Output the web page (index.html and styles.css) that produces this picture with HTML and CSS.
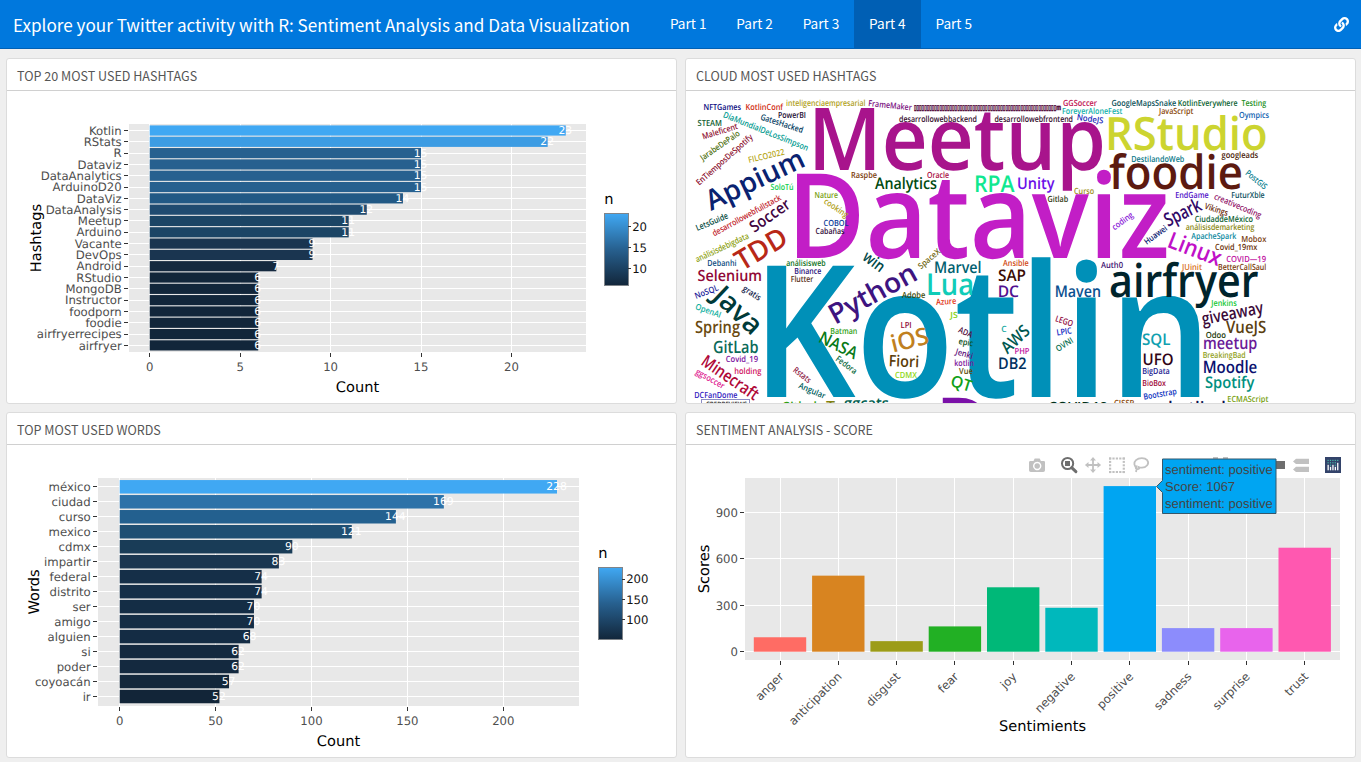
FILE: index.html
```html
<!DOCTYPE html>
<html lang="en">
<head>
<meta charset="utf-8">
<title>Explore your Twitter activity with R</title>
<link rel="stylesheet" href="styles.css">
</head>
<body>
<header class="navbar">
  <h1 class="brand">Explore your Twitter activity with R: Sentiment Analysis and Data Visualization</h1>
  <nav class="tabs">
    <a class="tab">Part 1</a><a class="tab">Part 2</a><a class="tab">Part 3</a><a class="tab active">Part 4</a><a class="tab">Part 5</a>
  </nav>
  <svg class="link-icon" viewBox="0 0 512 512"><path d="M326.612 185.391c59.747 59.809 58.927 155.698.36 214.59-.11.12-.24.25-.36.37l-67.2 67.2c-59.27 59.27-155.699 59.262-214.96 0-59.27-59.26-59.27-155.7 0-214.96l37.106-37.106c9.84-9.84 26.786-3.3 27.294 10.606.648 17.722 3.826 35.527 9.69 52.721 1.986 5.822.567 12.262-3.783 16.612l-13.087 13.087c-28.026 28.026-28.905 73.66-1.155 101.96 28.024 28.579 74.086 28.749 102.325.51l67.2-67.19c28.191-28.191 28.073-73.757 0-101.83-3.701-3.694-7.429-6.564-10.341-8.569a16.037 16.037 0 0 1-6.947-12.606c-.396-10.567 3.348-21.456 11.698-29.806l21.054-21.055c5.521-5.521 14.182-6.199 20.584-1.731a152.482 152.482 0 0 1 20.522 17.197zM467.547 44.449c-59.261-59.262-155.69-59.27-214.96 0l-67.2 67.2c-.12.12-.25.25-.36.37-58.566 58.892-59.387 154.781.36 214.59a152.454 152.454 0 0 0 20.521 17.196c6.402 4.468 15.064 3.789 20.584-1.731l21.054-21.055c8.35-8.35 12.094-19.239 11.698-29.806a16.037 16.037 0 0 0-6.947-12.606c-2.912-2.005-6.64-4.875-10.341-8.569-28.073-28.073-28.191-73.639 0-101.83l67.2-67.19c28.239-28.239 74.3-28.069 102.325.51 27.75 28.3 26.872 73.934-1.155 101.96l-13.087 13.087c-4.35 4.35-5.769 10.79-3.783 16.612 5.864 17.194 9.042 34.999 9.69 52.721.509 13.906 17.454 20.446 27.294 10.606l37.106-37.106c59.271-59.259 59.271-155.699.001-214.959z"/></svg>
</header>
<main class="grid">
  <section class="card"><h2 class="card-title">TOP 20 MOST USED HASHTAGS</h2><svg id="hashtags" class="chart" viewBox="7 91 669 312"></svg></section>
  <section class="card"><h2 class="card-title">CLOUD MOST USED HASHTAGS</h2><svg id="cloud" class="chart cloud" viewBox="686 91 669 312"></svg></section>
  <section class="card"><h2 class="card-title">TOP MOST USED WORDS</h2><svg id="words" class="chart" viewBox="7 445 669 312"></svg></section>
  <section class="card"><h2 class="card-title">SENTIMENT ANALYSIS - SCORE</h2><svg id="scores" class="chart" viewBox="686 445 669 312"></svg></section>
</main>
<script src="charts.js"></script>
</body>
</html>
```

FILE: styles.css
```css
* { box-sizing: border-box; }
body {
  margin: 0;
  height: 762px;
  overflow: hidden;
  background: #efefef;
  font-family: "Noto Sans CJK SC", "Open Sans", sans-serif;
}
.navbar {
  display: flex;
  align-items: center;
  height: 49px;
  padding: 0 12px 0 13px;
  background: #0078dd;
  border-bottom: 1px solid #0060b4;
  color: #fff;
}
.brand {
  width: 642px;
  margin: 0;
  font-size: 17.12px;
  font-weight: 400;
  line-height: 47px;
  white-space: nowrap;
}
.tabs { display: flex; height: 48px; }
.tab {
  width: 66.4px;
  text-align: center;
  font-size: 13.6px;
  line-height: 47px;
  white-space: nowrap;
}
.tab.active { background: #005fb4; }
.link-icon { width: 15px; height: 15px; margin-left: auto; fill: #fff; }
.grid {
  display: grid;
  grid-template-columns: 671px 671px;
  grid-template-rows: 346px 346px;
  gap: 8px;
  padding: 9px 0 0 6px;
}
.card {
  display: flex;
  flex-direction: column;
  overflow: hidden;
  background: #fff;
  border: 1px solid #dcdcdc;
  border-radius: 3px;
}
.card-title {
  height: 32px;
  margin: 0;
  padding-left: 10px;
  border-bottom: 1px solid #d0d0d0;
  color: #565656;
  font-size: 12.55px;
  font-weight: 400;
  line-height: 33px;
}
.chart { display: block; width: 669px; height: 312px; font-family: "DejaVu Sans", sans-serif; text-rendering: geometricPrecision; }
.cloud { font-family: "Open Sans", "Noto Sans", sans-serif; font-weight: 600; }
.tick-label { font-size: 11.7px; fill: #4d4d4d; }
.legend-label { font-size: 11.7px; fill: #111; }
.axis-title { font-size: 14.6px; fill: #000; }
.value { font-size: 10.8px; fill: #fff; text-anchor: middle; }
.mid { text-anchor: middle; }
.end { text-anchor: end; }
.hover { font-family: "Liberation Sans", Arial, sans-serif; font-size: 13px; fill: #444; }
.symbol { font-family: "DejaVu Sans", sans-serif; stroke: #500838; stroke-width: 0.5px; }
```

FILE: charts.js
```js
const NS = 'http://www.w3.org/2000/svg';
function add(parent, tag, attrs, text) {
  const e = document.createElementNS(NS, tag);
  for (const k in attrs) e.setAttribute(k, attrs[k]);
  if (text !== undefined) e.textContent = text;
  parent.appendChild(e);
  return e;
}
const rect = (s, x, y, w, h, fill, more) => add(s, 'rect', { x, y, width: w, height: h, fill, ...more });

function barChart(c) {
  const s = document.getElementById(c.id);
  const [px, py, pw, ph] = c.plot;
  rect(s, px, py, pw, ph, '#e8e8e8');
  c.ticks.forEach(t => {
    const x = Math.round(c.x0 + t * c.unit - 0.5);
    rect(s, x, py, 1, ph, '#fff');
    rect(s, x, py + ph + 1, 1, 4, '#333');
    add(s, 'text', { x: c.x0 + t * c.unit, y: py + ph + 19, class: 'tick-label mid' }, t);
  });
  c.rows.forEach((r, i) => {
    const y = c.y0 + i * c.step;
    rect(s, px, Math.round(y - 0.5), pw, 1, '#fff');
    rect(s, px - 5, Math.round(y - 0.5), 4, 1, '#333');
    add(s, 'text', { x: px - 7.3, y: y + 4.2, class: 'tick-label end' }, r[0]);
  });
  c.rows.forEach((r, i) => rect(s, c.x0, c.y0 + i * c.step - c.step * 0.45, r[1] * c.unit, c.step * 0.9, c.colors[r[1]]));
  c.rows.forEach((r, i) => add(s, 'text', { x: c.x0 + r[1] * c.unit - 0.5, y: c.y0 + i * c.step + 3.5, class: 'value' }, r[1]));
  add(s, 'text', { x: px + pw / 2, y: py + ph + 40.3, class: 'axis-title mid' }, 'Count');
  add(s, 'text', { transform: `translate(${c.label[1]} ${py + ph / 2}) rotate(-90)`, class: 'axis-title mid' }, c.label[0]);
  const [lx, ly] = c.legend;
  const g = add(s, 'linearGradient', { id: c.id + '-g', x1: 0, y1: 0, x2: 0, y2: 1 });
  [['0', '#40a8f3'], ['0.5', '#27608f'], ['1', '#12263a']].forEach(a => add(g, 'stop', { offset: a[0], 'stop-color': a[1] }));
  add(s, 'text', { x: lx + 0.2, y: ly - 9.3, class: 'axis-title' }, 'n');
  rect(s, lx + 0.5, ly + 0.5, 24, 72, `url(#${c.id}-g)`, { stroke: '#7f8489' });
  c.scale.forEach(a => {
    rect(s, lx + 24, Math.round(a[1] - 0.5), 3, 1, '#333');
    add(s, 'text', { x: lx + 28.2, y: a[1] + 4.3, class: 'legend-label' }, a[0]);
  });
}

barChart({
  id: 'hashtags', plot: [129, 124, 457, 228], x0: 149.7, unit: 18.09, y0: 130.5, step: 11.31,
  ticks: [0, 5, 10, 15, 20], label: ['Hashtags', 41], legend: [604, 213],
  scale: [[20, 226.7], [15, 247.7], [10, 268.3]],
  colors: { 6: '#12263a', 7: '#15293f', 9: '#1a3550', 11: '#1c4565', 12: '#204b70', 14: '#225985', 15: '#27608f', 22: '#3c9ce3', 23: '#40a8f3' },
  rows: [['Kotlin', 23], ['RStats', 22], ['R', 15], ['Dataviz', 15], ['DataAnalytics', 15], ['ArduinoD20', 15], ['DataViz', 14], ['DataAnalysis', 12], ['Meetup', 11], ['Arduino', 11], ['Vacante', 9], ['DevOps', 9], ['Android', 7], ['RStudio', 6], ['MongoDB', 6], ['Instructor', 6], ['foodporn', 6], ['foodie', 6], ['airfryerrecipes', 6], ['airfryer', 6]]
});
barChart({
  id: 'words', plot: [98, 478, 481, 228], x0: 119.7, unit: 1.918, y0: 486.8, step: 14.98,
  ticks: [0, 50, 100, 150, 200], label: ['Words', 39], legend: [598, 567],
  scale: [[200, 579], [150, 599.7], [100, 619.8]],
  colors: { 228: '#40a8f3', 169: '#2d72a8', 144: '#23608f', 121: '#1f4f73', 90: '#193c57', 83: '#1a3650', 74: '#152f48', 70: '#142d45', 68: '#142c44', 62: '#14293f', 57: '#13273b', 52: '#122538' },
  rows: [['méxico', 228], ['ciudad', 169], ['curso', 144], ['mexico', 121], ['cdmx', 90], ['impartir', 83], ['federal', 74], ['distrito', 74], ['ser', 70], ['amigo', 70], ['alguien', 68], ['si', 62], ['poder', 62], ['coyoacán', 57], ['ir', 52]]
});

(function scores() {
  const s = document.getElementById('scores');
  rect(s, 745, 478, 595, 182, '#e8e8e8');
  const zero = 651.7, unit = 0.1552;
  [0, 300, 600, 900].forEach(v => {
    const y = Math.round(zero - v * unit - 0.5);
    rect(s, 745, y, 595, 1, '#fff');
    rect(s, 740, y, 4, 1, '#333');
    add(s, 'text', { x: 738, y: y + 4.5, class: 'tick-label end' }, v);
  });
  [['anger', 93, '#ff6c64'], ['anticipation', 490, '#d88420'], ['disgust', 68, '#9c9c18'], ['fear', 163, '#22b024'], ['joy', 415, '#00b878'], ['negative', 283, '#00b8bc'], ['positive', 1067, '#00a5f2'], ['sadness', 152, '#8c8cfc'], ['surprise', 152, '#e864ec'], ['trust', 670, '#ff58b0']].forEach((r, i) => {
    const x = 780 + i * 58.3;
    rect(s, Math.round(x - 0.5), 478, 1, 182, '#fff');
    rect(s, Math.round(x - 0.5), 661, 1, 4, '#333');
    rect(s, x - 26.2, zero - r[1] * unit, 52.4, r[1] * unit, r[2]);
    add(s, 'text', { transform: `translate(${x + 4.3} 677.3) rotate(-45)`, class: 'tick-label end' }, r[0]);
  });
  add(s, 'text', { x: 1042.5, y: 731, class: 'axis-title mid' }, 'Sentimients');
  add(s, 'text', { transform: 'translate(709 569) rotate(-90)', class: 'axis-title mid' }, 'Scores');

  const light = '#c1c1c1', dark = '#6e6e6e';
  add(s, 'path', { fill: light, 'fill-rule': 'evenodd', d: 'M1030.5 461h3l1.2-2.4h5l1.2 2.4h3q1.1 0 1.1 1.2v8q0 1.8-1.8 1.8h-12.4q-1.8 0-1.8-1.8v-8q0-1.2 1.5-1.2zM1037.2 461.8a4.2 4.2 0 1 0 .01 0zM1037.2 463.2a2.8 2.8 0 1 1-.01 0z' });
  add(s, 'circle', { cx: 1067.6, cy: 463.5, r: 5.6, fill: 'none', stroke: dark, 'stroke-width': 2 });
  rect(s, 1065, 461, 5, 5, dark);
  add(s, 'path', { d: 'M1071.7 467.7l4.2 4', stroke: dark, 'stroke-width': 3, 'stroke-linecap': 'round' });
  add(s, 'path', { fill: light, d: 'M1093 457l3 3.6h-2.1v3.5h3.6v-2.1l3.6 3-3.6 3v-2.1h-3.6v3.5h2.1l-3 3.6-3-3.6h2.1v-3.5h-3.6v2.1l-3.6-3 3.6-3v2.1h3.6v-3.5h-2.1z' });
  for (let k = 0; k < 5; k++) {
    const o = k * 3.4;
    rect(s, 1109 + o, 457.5, 2.2, 2, light);
    rect(s, 1109 + o, 471, 2.2, 2, light);
    rect(s, 1109, 457.5 + o, 2.2, 2, light);
    rect(s, 1122.7, 457.5 + o, 2.2, 2, light);
  }
  add(s, 'path', { fill: 'none', stroke: light, 'stroke-width': 1.8, d: 'M1137 467.6c-3-1.4-3.6-5-1-7.4 3-2.8 8.8-2.8 11.2 0 2.6 3.4-.6 7.6-5.6 7.4-2 0-3-.3-4-.9M1137.4 466.2c-2-.2-2.4 2.4-.4 2.8s3.2-1.2 1.4-2.2M1136.6 469l-.6 3' });
  rect(s, 1213, 457, 5, 4, light);
  rect(s, 1223, 457, 5, 4, light);
  rect(s, 1270, 461, 15, 8, dark);
  add(s, 'path', { fill: light, d: 'M1293 461.5l3-2.7h13v5.2h-13zM1293 469.5l3-2.7h13v5.2h-13z' });
  rect(s, 1325, 457, 16, 16, '#33436a');
  [464.8, 466.8, 464.8, 466.8, 462.8].forEach((top, k) => {
    const x = 1327.5 + k * 2.4;
    rect(s, x, top, 1.3, 470.3 - top, '#fff');
    for (let y = 459.8; y < top - 1.5; y += 2.4) rect(s, x, y, 1.2, 1.2, '#48b8a8');
  });
  add(s, 'path', { fill: '#00a5f2', stroke: '#35576a', d: 'M1156.5 486.5l6-6v-21.5h113.5v54.5h-113.5v-21z' });
  ['sentiment: positive', 'Score: 1067', 'sentiment: positive'].forEach((t, i) =>
    add(s, 'text', { x: 1165, y: 474 + i * 17, class: 'hover' }, t));
})();

/* Each word: text, font size, colour, baseline start x/y, baseline end x/y */
const words = [
  ['Kotlin', 184, '#0090b8', 752, 397.3, 1212, 397.3],
  ['Dataviz', 118, '#c21ec6', 787, 257.7, 1170, 257.7],
  ['Meetup', 87, '#a8148c', 808, 170.3, 1106, 170.3],
  ['RStudio', 46, '#ccd430', 1105, 149.7, 1267.5, 149.7],
  ['foodie', 47, '#5c1a10', 1109, 189, 1243, 189],
  ['airfryer', 46, '#00242c', 1109, 297.3, 1258.5, 297.3],
  ['NFTGames', 8, '#0a0a80', 703.5, 110, 741, 110],
  ['KotlinConf', 8, '#d02a10', 745.5, 110, 783, 110],
  ['inteligenciaempresarial', 8, '#b0a020', 786, 106.3, 865.5, 106.3],
  ['FrameMaker', 8, '#7a1080', 868, 106, 911.5, 110.5],
  ['PowerBI', 8, '#200830', 778, 117.7, 806, 117.7],
  ['GatesHacked', 8, '#003a60', 760, 119.5, 802, 133],
  ['STEAM', 8, '#106030', 697.5, 126, 722, 126],
  ['Maleficent', 8, '#901030', 703.3, 139.5, 738.3, 128.7],
  ['JarabeDePalo', 8, '#507010', 702.7, 161, 740.5, 134.7],
  ['EnTiemposDeSpotify', 8, '#8c1030', 699.3, 185.7, 753.5, 138],
  ['DíaMundialDeLosSimpson', 8, '#009a90', 722.5, 117, 807, 151],
  ['FILCO2022', 8, '#b8a820', 749, 163, 785, 154.5],
  ['Appium', 28, '#0a2270', 711, 211, 807, 165.5],
  ['SoloTú', 8, '#10d050', 770.5, 190, 793.5, 190],
  ['LetsGuide', 8, '#00483c', 697.3, 231, 728.7, 218],
  ['desarrollowebfullstack', 8, '#c02028', 714.3, 236.5, 781.7, 199.5],
  ['Soccer', 16, '#400440', 754.3, 233, 791.5, 207],
  ['Raspbe', 8, '#7a3a08', 851, 177.7, 877, 177.7],
  ['Nature', 8, '#78a010', 814.5, 197.7, 838, 197.7],
  ['cooking', 8, '#b0a020', 823.3, 202.7, 846, 218],
  ['COBOL', 8, '#0a3a98', 823.5, 226, 848.5, 226],
  ['Cabañas', 8, '#300838', 815.5, 234, 844.5, 234],
  ['TDD', 28, '#b82818', 742, 271.5, 790, 243],
  ['análisisdebigdata', 8, '#8ca010', 697, 262.5, 749.5, 238],
  ['desarrollowebbackend', 8, '#300828', 899, 121.7, 977, 121.7],
  ['desarrollowebfrontend', 8, '#300828', 994.5, 121.7, 1073, 121.7],
  ['▯'.repeat(56) + 'm', 7.5, '#500838', 914, 110, 1061, 110, 'symbol'],
  ['Oracle', 8, '#a80840', 927, 177.7, 949, 177.7],
  ['Analytics', 16, '#004a10', 875, 189.3, 937, 189.3],
  ['RPA', 23, '#10e890', 974, 192.3, 1014.5, 192.3],
  ['Unity', 16, '#6a10e8', 1017, 189.3, 1054.5, 189.3],
  ['Gitlab', 8, '#303810', 1047.5, 202, 1068.3, 202],
  ['Curso', 8, '#a09020', 1074, 193.7, 1094.3, 193.7],
  ['GGSoccer', 8, '#c01050', 1063, 106.3, 1097, 106.3],
  ['ForeverAloneFest', 8, '#10b0a8', 1062, 114.3, 1122.3, 114.3],
  ['NodeJS', 8, '#1828b8', 1076.5, 120, 1103, 123.7],
  ['GoogleMapsSnake', 8, '#0a5058', 1111.5, 106.3, 1176.3, 106.3],
  ['KotlinEverywhere', 8, '#086030', 1177.7, 106.3, 1237.5, 106.3],
  ['Testing', 8, '#209020', 1241.5, 106.3, 1266.3, 106.3],
  ['JavaScript', 8, '#8a4808', 1159, 114.3, 1193.3, 114.3],
  ['Oympics', 8, '#1060b0', 1239, 118.3, 1269, 118.3],
  ['DestilandoWeb', 8, '#0a7888', 1131.3, 162, 1184.3, 162],
  ['googleads', 8, '#4a2008', 1221.5, 157.7, 1258.3, 157.7],
  ['PostGIS', 8, '#0a8090', 1244.7, 174, 1264.3, 190],
  ['EndGame', 8, '#5010c8', 1175.3, 198, 1208.7, 198],
  ['FuturXble', 8, '#0a5060', 1231.3, 198, 1264.7, 198],
  ['creativecoding', 8, '#901068', 1213.5, 198.7, 1260, 218.3],
  ['Vikings', 8, '#6a2808', 1204, 208.5, 1227, 216],
  ['Spark', 19, '#300868', 1168, 227, 1203, 209.7],
  ['CiudaddeMéxico', 8, '#0a6030', 1194.7, 222, 1253, 222],
  ['análisisdemarketing', 8, '#8a8810', 1185.7, 230.3, 1254.3, 230.3],
  ['ApacheSpark', 8, '#0a88a0', 1191.3, 238.7, 1236.3, 238.7],
  ['Mobox', 8, '#7a3c10', 1241.3, 242.3, 1266.3, 242.3],
  ['Covid_19mx', 8, '#6a3008', 1215, 250, 1257.3, 250],
  ['Huawei', 8, '#0a1870', 1146.7, 245, 1168, 229.5],
  ['coding', 8, '#8a20d8', 1114.5, 230.5, 1134, 216.3],
  ['Linux', 23, '#c010c8', 1166, 246.5, 1218, 266.5],
  ['Debanhi', 8, '#0a4a80', 707.3, 266, 736.5, 266],
  ['Selenium', 15.5, '#900838', 697.5, 280.7, 762, 280.7],
  ['NoSQL', 8, '#1a1a98', 696, 299, 719, 290],
  ['gratis', 8, '#102048', 742, 290, 758.7, 301],
  ['Java', 28, '#003a38', 711, 298, 752, 336.5],
  ['OpenAI', 8, '#10b0a0', 694.7, 309, 720, 318],
  ['Spring', 17, '#6a4a10', 695, 333, 740, 333],
  ['GitLab', 17, '#0a6a58', 713, 353, 758.5, 353],
  ['Covid_19', 8, '#7a10a0', 725.7, 362, 758, 362],
  ['Minecraft', 17, '#b00838', 700, 364, 754, 401],
  ['holding', 8, '#d01060', 734.3, 374, 761.3, 374],
  ['ggsoccer', 8, '#e02090', 695, 373.5, 722.5, 389],
  ['DCFanDome', 8, '#3018c0', 694.3, 398, 737.5, 398],
  ['CREDREVIEWS', 7.5, '#202020', 706, 406.5, 747, 406.5],
  ['análisisweb', 8, '#0a7018', 786.3, 266, 825.5, 266],
  ['Binance', 8, '#28107a', 794.3, 274, 821.3, 274],
  ['Flutter', 8, '#5a3018', 790.7, 282, 813.3, 282],
  ['win', 16, '#004848', 861.5, 259, 880, 273],
  ['Python', 28, '#3e1480', 835, 325, 919.5, 279],
  ['Batman', 8, '#30a010', 830.3, 334, 857.3, 334],
  ['NASA', 17, '#0a7a18', 817.5, 341.5, 854, 359.5],
  ['Fedora', 8, '#0a6a40', 835, 360, 854.5, 374.5],
  ['Rstats', 8, '#8a1040', 792.5, 371, 808.3, 383.5],
  ['Angular', 8, '#006060', 798, 387.7, 824, 399],
  ['Github', 14, '#30a010', 781.5, 411.5, 821, 411.5],
  ['T', 14, '#808010', 826, 411, 835, 411],
  ['ggcats', 16, '#006050', 844, 408.5, 889, 408.5],
  ['SpaceX', 8, '#706810', 921, 269.5, 941, 252.5],
  ['Marvel', 16, '#006070', 934, 273, 981.5, 273],
  ['Lua', 30, '#10ccb8', 926, 295.3, 974, 295.3],
  ['Adobe', 8, '#404a08', 902, 298.3, 925.3, 298.3],
  ['Azure', 8, '#e03010', 936.3, 305, 956.3, 303.7],
  ['JS', 8, '#80d010', 950.3, 317.7, 957.7, 317.7],
  ['Ansible', 8, '#d04810', 1003, 266, 1028.7, 266],
  ['SAP', 16, '#3a0c04', 998, 281, 1026, 281],
  ['DC', 16, '#501090', 997.7, 297, 1019, 297],
  ['LPI', 8, '#900838', 900.5, 328, 911.7, 328],
  ['iOS', 24, '#c08020', 893, 352.5, 930, 343.5],
  ['Fiori', 16, '#5a3c08', 888.5, 366.3, 919, 367.5],
  ['CDMX', 8, '#90d820', 895, 378, 917, 378],
  ['ADA', 8, '#500838', 957.7, 332, 971, 338],
  ['epic', 8, '#0a5018', 958.3, 344, 972.7, 346.3],
  ['Jenki', 8, '#60107a', 955, 354, 972, 359],
  ['kotlin', 8, '#7a1098', 954.3, 366, 974, 366],
  ['Vue', 8, '#5a4a08', 959, 373.7, 972.7, 373.7],
  ['QT', 16, '#10a018', 949.5, 385.5, 970, 392],
  ['C', 8, '#10a8a0', 1001.3, 332.3, 1006.7, 332.3],
  ['AWS', 17, '#005850', 1007.5, 354.5, 1031, 332.5],
  ['PHP', 8, '#c010a0', 1014.5, 354, 1029.5, 354],
  ['DB2', 16, '#003060', 998, 369.3, 1026.5, 369.3],
  ['Maven', 16, '#0a5090', 1054.7, 297.3, 1101, 297.3],
  ['LEGO', 8, '#900840', 1054.7, 321, 1072, 326.7],
  ['LPIC', 8, '#0818c0', 1057, 335.5, 1072, 333.3],
  ['OVNI', 8, '#0a7050', 1058, 352, 1074, 342],
  ['D', 62, '#7a10a8', 936, 441.5, 989, 441.5],
  ['COVID19', 14, '#003018', 1048, 411.5, 1108, 411.5],
  ['CISSP', 8, '#8a4808', 1114, 406, 1134.3, 406],
  ['kotlind', 16, '#0a1050', 1168, 413, 1226, 413],
  ['Auth0', 8, '#401070', 1101, 268, 1123, 268],
  ['JUinit', 8, '#d87020', 1182, 270.3, 1202, 270.3],
  ['COVID—19', 8, '#c010a0', 1226.3, 261.7, 1266, 261.7],
  ['BetterCallSaul', 8, '#7a3a08', 1218, 270.3, 1266.3, 270.3],
  ['Jenkins', 8, '#10c830', 1211.3, 306, 1236.7, 306],
  ['giveaway', 17, '#3a0838', 1203, 325, 1264, 313],
  ['VueJS', 17, '#5a4010', 1226, 333, 1266.3, 333],
  ['Odoo', 8, '#203808', 1205.7, 338, 1226, 338],
  ['meetup', 17, '#6a1a98', 1203, 348.7, 1257.3, 348.7],
  ['BreakingBad', 8, '#90a018', 1202.7, 358, 1245.7, 358],
  ['Moodle', 17, '#0a1070', 1202.7, 373, 1257.3, 373],
  ['Spotify', 16, '#009080', 1205, 388.3, 1254.3, 388.3],
  ['ECMAScript', 8, '#78a010', 1227.3, 401.7, 1268.3, 401.7],
  ['SQL', 16, '#10a0b0', 1142, 345.3, 1170.5, 345.3],
  ['UFO', 16, '#300418', 1142.5, 365, 1173.5, 365],
  ['BigData', 8, '#1a1890', 1142.3, 374, 1169.7, 374],
  ['BioBox', 8, '#a00838', 1142.3, 385.7, 1166, 385.7],
  ['Bootstrap', 8, '#0a30c0', 1144, 399.7, 1177, 394]
];
const cloud = document.getElementById('cloud');
rect(cloud, 701.5, 399.5, 48, 12, '#fff', { stroke: '#8c8cc4' });
words.forEach(([t, size, fill, x1, y1, x2, y2, cls]) => add(cloud, 'text', {
  transform: `translate(${x1} ${y1}) rotate(${Math.atan2(y2 - y1, x2 - x1) * 180 / Math.PI})`,
  'font-size': size === 8 ? 8.5 : size, fill, textLength: Math.hypot(x2 - x1, y2 - y1), lengthAdjust: 'spacingAndGlyphs', class: cls || 'word'
}, t));
```
